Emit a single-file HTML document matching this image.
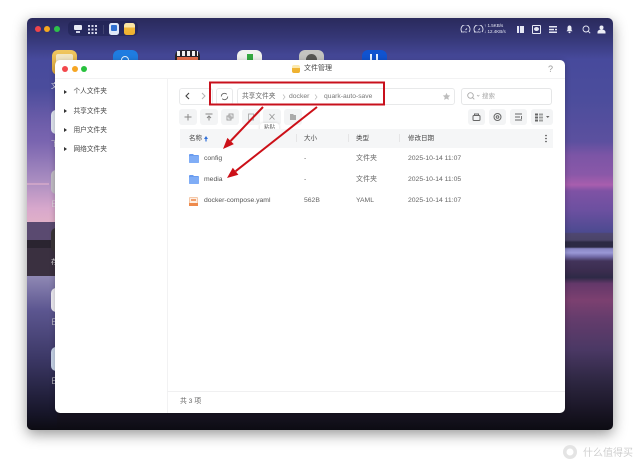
<!DOCTYPE html>
<html><head><meta charset="utf-8">
<style>
html,body{margin:0;padding:0;background:#fff;}
#p{position:relative;width:640px;height:466px;overflow:hidden;background:#fff;font-family:"Liberation Sans","Noto Sans CJK SC",sans-serif;color:#4a4a4a;filter:blur(.25px);}
.a{position:absolute;}
.t{position:absolute;white-space:nowrap;font-size:7px;line-height:10px;color:#555;}
.r{font-size:6.8px;}
.btn{position:absolute;width:18px;height:16px;background:#f3f4f5;border-radius:3px;}
.btn svg{position:absolute;left:0;top:0;}
#shadow{position:absolute;left:27px;top:18px;width:586px;height:412px;border-radius:5px;box-shadow:0 4px 14px rgba(0,0,0,.42);}
#desk{position:absolute;left:27px;top:18px;width:586px;height:412px;border-radius:5px;overflow:hidden;
background:linear-gradient(180deg,#2a2a5c 0,#363878 5%,#474a9c 10%,#4c4d9c 20%,#5c509f 30%,#7c55a6 33.3%,#8a58a8 38%,#a85eae 40.5%,#7e52a4 42%,#6c50a0 46.6%,#4c4a90 52%,#4e4670 52.3%,#4a4468 53.9%,#2c2a44 54.4%,#2c2a44 55.6%,#8886c4 56%,#9a98d6 57%,#6f68a4 58%,#42335a 59%,#3a2c4e 61.5%,#2e2a46 63%,#64386a 64.5%,#7c4070 68.4%,#643c6c 73%,#4a3864 80.6%,#2e2742 87.9%,#1a1626 95%,#0c0b12 100%);}
.ic{position:absolute;width:25px;height:25px;border-radius:6px;}
</style></head><body>
<div id="p">
<div id="shadow"></div>
<div id="desk">
  <!-- left side sky / sand -->
  <div class="a" style="left:0;top:70px;width:30px;height:134px;background:linear-gradient(180deg,rgba(90,80,168,0) 0,#7a65b0 40%,#a88cc0 68%,#d8a8cc 90%,#e0b0c8 100%);"></div>
  <div class="a" style="left:0;top:204px;width:30px;height:18px;background:#5a4a70;"></div>
  <div class="a" style="left:0;top:222px;width:30px;height:8px;background:#2a2430;"></div>
  <div class="a" style="left:0;top:230px;width:30px;height:28px;background:#3a3040;"></div>
  <div class="a" style="left:0;top:258px;width:30px;height:34px;background:linear-gradient(180deg,#8f88b4,#5c5690);"></div>
  <div class="a" style="left:0;top:292px;width:30px;height:120px;background:linear-gradient(180deg,#5c5690,#3c3866 40%,#17162a 85%,#0c0b12);"></div>
  <div class="a" style="left:0;top:165px;width:22px;height:2px;background:#e0b0cc;opacity:.6;"></div>
  <!-- top bar -->
  <div class="a" style="left:8px;top:8px;width:6px;height:6px;border-radius:50%;background:#f0444a;"></div>
  <div class="a" style="left:17px;top:8px;width:6px;height:6px;border-radius:50%;background:#f6a91f;"></div>
  <div class="a" style="left:27px;top:8px;width:6px;height:6px;border-radius:50%;background:#2ec14a;"></div>
  <div class="a" style="left:41px;top:3px;width:70px;height:15px;border-radius:5px;background:rgba(30,32,80,.55);"></div>
  <div class="a" style="left:47px;top:7px;width:8px;height:5px;border-radius:1px;background:#e8eaf4;"></div>
  <div class="a" style="left:49px;top:13px;width:4px;height:1.5px;background:#cfd2e6;"></div>
  <svg class="a" style="left:61px;top:7px;" width="9" height="9"><g fill="#d6d8ec"><rect x="0" y="0" width="2" height="2"/><rect x="3.500" y="0" width="2" height="2"/><rect x="7" y="0" width="2" height="2"/><rect x="0" y="3.500" width="2" height="2"/><rect x="3.500" y="3.500" width="2" height="2"/><rect x="7" y="3.500" width="2" height="2"/><rect x="0" y="7" width="2" height="2"/><rect x="3.500" y="7" width="2" height="2"/><rect x="7" y="7" width="2" height="2"/></g></svg>
  <div class="a" style="left:76px;top:7px;width:1px;height:9px;background:rgba(255,255,255,.12);"></div>
  <div class="a" style="left:82px;top:5px;width:10px;height:12px;border-radius:2.500px;background:#dfe8f8;"></div>
  <div class="a" style="left:84px;top:7px;width:6px;height:6px;border-radius:1px;background:#2f6fd0;"></div>
  <div class="a" style="left:97px;top:5px;width:11px;height:12px;border-radius:2.500px;background:linear-gradient(180deg,#fbe6a6 0,#fbe6a6 35%,#f2b93a 40%,#eeb02e 100%);"></div>
  <!-- status icons -->
  <svg class="a" style="left:433px;top:7px;" width="24" height="8" fill="none" stroke="#e2e4f2" stroke-width=".9"><path d="M2 7a4.500 4.500 0 1 1 7 0"/><path d="M5.500 5l1.500-1.500"/><path d="M15 7a4.500 4.500 0 1 1 7 0"/><path d="M18.500 5l1.500-1.500"/></svg>
  <div class="t" style="left:434px;top:12px;font-size:3px;line-height:4px;color:#dfe1f0;">CPU</div>
  <div class="t" style="left:447px;top:12px;font-size:3px;line-height:4px;color:#dfe1f0;">RAM</div>
  <div class="t" style="left:457px;top:5px;font-size:4.500px;line-height:6px;color:#e6e8f4;">↑ 1.5KB/s</div>
  <div class="t" style="left:457px;top:11px;font-size:4.500px;line-height:6px;color:#e6e8f4;">↓ 12.4KB/s</div>
  <div class="a" style="left:490px;top:8px;width:7px;height:7px;background:#e6e8f4;"></div>
  <div class="a" style="left:492px;top:8px;width:1px;height:7px;background:#3d4088;"></div>
  <div class="a" style="left:505px;top:7px;width:7px;height:7px;border:1px solid #e6e8f4;border-radius:1px;"></div>
  <div class="a" style="left:507px;top:9px;width:5px;height:4px;background:#e6e8f4;border-radius:50%;"></div>
  <svg class="a" style="left:522px;top:8px;" width="8" height="7" fill="#e6e8f4"><rect x="0" y="0" width="8" height="1.500"/><rect x="0" y="2.800" width="5" height="1.500"/><rect x="6" y="2.800" width="2" height="1.500"/><rect x="0" y="5.500" width="8" height="1.500"/></svg>
  <svg class="a" style="left:539px;top:7px;" width="7" height="9" fill="#eceef6"><path d="M3.500 .5c1.500 0 2 1.200 2 2.500v2l1 1.300H.5l1-1.300V3c0-1.300.5-2.500 2-2.500z"/><rect x="2.500" y="6.800" width="2" height="1.300" rx=".6"/></svg>
  <svg class="a" style="left:555px;top:7px;" width="9" height="9" fill="none" stroke="#e6e8f4" stroke-width=".9"><circle cx="4" cy="4" r="3"/><path d="M6.200 6.200l2 2"/></svg>
  <svg class="a" style="left:570px;top:7px;" width="9" height="9" fill="#eceef6"><circle cx="4.500" cy="2.500" r="2"/><path d="M.5 7c0-1.500 1.800-2.500 4-2.500s4 1 4 2.500v1.500h-8z"/></svg>
  <!-- desktop icons -->
  <div class="ic" style="left:25px;top:32px;background:linear-gradient(180deg,#f0c760,#dda63a);"></div>
  <div class="a" style="left:29px;top:36px;width:17px;height:14px;background:#f2e6c4;border-radius:2px;"></div>
  <div class="ic" style="left:86px;top:32px;background:#1f7ce0;"></div>
  <div class="a" style="left:94px;top:38px;width:8px;height:8px;border-radius:50%;border:1.500px solid #e8f1fc;box-sizing:border-box;"></div>
  <div class="ic" style="left:148px;top:32px;background:#26242a;"></div>
  <div class="a" style="left:150px;top:33px;width:21px;height:5px;background:repeating-linear-gradient(90deg,#f0f0f0 0 3px,#26242a 3px 5px);"></div>
  <div class="a" style="left:150px;top:39px;width:21px;height:3px;background:#e8704a;"></div>
  <div class="ic" style="left:210px;top:32px;background:#f1f2ee;"></div>
  <div class="a" style="left:220px;top:36px;width:6px;height:6px;background:#35a93f;"></div>
  <div class="ic" style="left:272px;top:32px;background:#c4c4c0;"></div>
  <div class="a" style="left:279px;top:36px;width:11px;height:11px;border-radius:50%;background:#565652;"></div>
  <div class="ic" style="left:335px;top:32px;background:#1053d0;"></div>
  <div class="a" style="left:343px;top:36px;width:2px;height:7px;background:#e8f0ff;"></div>
  <div class="a" style="left:349px;top:36px;width:2px;height:7px;background:#e8f0ff;"></div>
  <!-- left edge icons peeking -->
  <div class="a" style="left:24px;top:92px;width:10px;height:24px;border-radius:5px;background:#dfe4ee;"></div>
  <div class="a" style="left:24px;top:152px;width:10px;height:24px;border-radius:5px;background:#c0bcc4;"></div>
  <div class="a" style="left:24px;top:210px;width:10px;height:24px;border-radius:5px;background:#3a3438;"></div>
  <div class="a" style="left:24px;top:270px;width:10px;height:24px;border-radius:5px;background:#eceaf0;"></div>
  <div class="a" style="left:24px;top:329px;width:10px;height:24px;border-radius:5px;background:#c6d2e6;"></div>
  <div class="t" style="left:24px;top:64px;color:#eee;">文</div>
  <div class="t" style="left:24px;top:122px;color:#ddd;">下</div>
  <div class="t" style="left:24px;top:182px;color:#ddd;">日</div>
  <div class="t" style="left:24px;top:240px;color:#ddd;">存</div>
  <div class="t" style="left:24px;top:300px;color:#ddd;">日</div>
  <div class="t" style="left:24px;top:359px;color:#ddd;">日</div>
</div>

<!-- file manager window -->
<div class="a" style="left:55px;top:60px;width:510px;height:353px;background:#fff;border-radius:5px;box-shadow:0 1px 6px rgba(0,0,0,.25);overflow:hidden;">
  <div class="a" style="left:0;top:18px;width:510px;height:1px;background:#f2f2f3;"></div>
  <div class="a" style="left:111.500px;top:19px;width:1px;height:334px;background:#f2f2f3;"></div>
  <div class="a" style="left:112px;top:331px;width:398px;height:1px;background:#f0f0f1;"></div>
  <div class="a" style="left:7px;top:6px;width:6px;height:6px;border-radius:50%;background:#f3484c;"></div>
  <div class="a" style="left:17px;top:6px;width:6px;height:6px;border-radius:50%;background:#f6a623;"></div>
  <div class="a" style="left:26px;top:6px;width:6px;height:6px;border-radius:50%;background:#27c13d;"></div>
  <div class="a" style="left:237px;top:5px;width:8px;height:8px;border-radius:2px;background:linear-gradient(180deg,#fbe9b0 0,#fbe9b0 35%,#f0b636 40%,#eeb02e 100%);"></div>
  <div class="t" style="left:249px;top:4px;color:#444;">文件管理</div>
  <div class="t" style="left:493px;top:4px;color:#999;font-size:9px;">?</div>

  <!-- sidebar -->
  <svg class="a" style="left:8px;top:30px;" width="5" height="80" fill="#333"><path d="M1 0l3 2-3 2z"/><path d="M1 19l3 2-3 2z"/><path d="M1 38l3 2-3 2z"/><path d="M1 57l3 2-3 2z"/></svg>
  <div class="t" style="left:18.500px;top:27px;color:#444;font-size:6.700px;">个人文件夹</div>
  <div class="t" style="left:18.500px;top:46.500px;color:#444;font-size:6.700px;">共享文件夹</div>
  <div class="t" style="left:18.500px;top:65.500px;color:#444;font-size:6.700px;">用户文件夹</div>
  <div class="t" style="left:18.500px;top:85px;color:#444;font-size:6.700px;">网络文件夹</div>

  <!-- nav -->
  <div class="a" style="left:124px;top:28px;width:32px;height:15px;border:1px solid #e8e9ea;border-radius:3px;"></div>
  <svg class="a" style="left:129px;top:31px;" width="8" height="10" fill="none" stroke="#444" stroke-width="1.100"><path d="M5 2L2 5l3 3"/></svg>
  <svg class="a" style="left:144px;top:31px;" width="8" height="10" fill="none" stroke="#b5b5b5" stroke-width="1"><path d="M3 2l3 3-3 3"/></svg>
  <div class="a" style="left:161px;top:28px;width:15px;height:15px;border:1px solid #e8e9ea;border-radius:3px;"></div>
  <svg class="a" style="left:164px;top:31px;" width="11" height="11" fill="none" stroke="#666" stroke-width=".9"><path d="M2.300 5.500a3.200 3.200 0 0 1 5.500-2.200"/><path d="M8.700 5.500a3.200 3.200 0 0 1-5.500 2.200"/></svg>
  <div class="a" style="left:182px;top:28px;width:216px;height:15px;border:1px solid #e8e9ea;border-radius:3px;"></div>
  <div class="t" style="left:187px;top:31.500px;font-size:6.700px;color:#666;">共享文件夹</div>
  <div class="t" style="left:234px;top:31.500px;font-size:6.800px;color:#777;">docker</div>
  <div class="t" style="left:269px;top:31.500px;font-size:6.700px;color:#777;">quark-auto-save</div>
  <svg class="a" style="left:226px;top:33px;" width="6" height="8" fill="none" stroke="#bbb" stroke-width=".7"><path d="M2 1.500l2 2.500-2 2.500"/></svg>
  <svg class="a" style="left:258px;top:33px;" width="6" height="8" fill="none" stroke="#bbb" stroke-width=".7"><path d="M2 1.500l2 2.500-2 2.500"/></svg>
  <svg class="a" style="left:387px;top:32px;" width="9" height="9" fill="#bdbdbd"><path d="M4.500.8l1.100 2.400 2.600.3-1.900 1.800.5 2.600-2.300-1.300-2.300 1.300.5-2.600L.8 3.500l2.600-.3z"/></svg>
  <div class="a" style="left:406px;top:28px;width:89px;height:15px;border:1px solid #e5e6e7;border-radius:3px;"></div>
  <svg class="a" style="left:411px;top:31px;" width="14" height="10" fill="none" stroke="#aaa" stroke-width=".9"><circle cx="4.500" cy="4.500" r="2.800"/><path d="M6.500 6.500l1.800 1.800"/><path d="M11 4l1.200 1.200L13.400 4" stroke-width=".7"/></svg>
  <div class="t" style="left:427px;top:31.500px;color:#aaa;font-size:6.500px;">搜索</div>

  <!-- toolbar -->
  <div class="btn" style="left:124px;top:49px;"><svg width="18" height="16" fill="none" stroke="#888" stroke-width="1"><path d="M9 5v6.500M5.500 8h7"/></svg></div>
  <div class="btn" style="left:145px;top:49px;"><svg width="18" height="16" fill="none" stroke="#888" stroke-width="1"><path d="M5.500 5h7M9 11.500V7M7 9l2-2 2 2"/></svg></div>
  <div class="btn" style="left:166px;top:49px;"><svg width="18" height="16" fill="none" stroke="#999" stroke-width=".9"><rect x="8" y="5" width="4" height="4"/><rect x="6" y="7" width="4" height="4"/></svg></div>
  <div class="btn" style="left:187px;top:49px;"><svg width="18" height="16" fill="none" stroke="#aaa" stroke-width=".9"><rect x="6.500" y="5" width="5" height="6"/></svg></div>
  <div class="btn" style="left:208px;top:49px;"><svg width="18" height="16" fill="none" stroke="#999" stroke-width=".9"><path d="M6.500 5l5 5.500M11.500 5l-5 5.500"/></svg></div>
  <div class="btn" style="left:229px;top:49px;"><svg width="18" height="16" fill="#aaa"><path d="M6 5h3l1 1h2v5H6z"/></svg></div>
  <div class="a" style="left:205px;top:63px;width:19px;height:10px;background:#fff;border-radius:3px;box-shadow:0 0 3px rgba(0,0,0,.15);"></div>
  <div class="t" style="left:209px;top:63px;font-size:5.500px;color:#666;">粘贴</div>
  <div class="btn" style="left:413px;top:49px;width:17px;"><svg width="17" height="16" fill="none" stroke="#666" stroke-width="1"><rect x="5" y="6.500" width="7" height="5" rx="1"/><path d="M6.500 6.500V5h4v1.500"/></svg></div>
  <div class="btn" style="left:434px;top:49px;width:17px;"><svg width="17" height="16" fill="none" stroke="#666" stroke-width="1"><circle cx="8.500" cy="8" r="3.500"/><circle cx="8.500" cy="8" r="1.300"/></svg></div>
  <div class="btn" style="left:455px;top:49px;width:17px;"><svg width="17" height="16" fill="none" stroke="#666" stroke-width=".9"><path d="M5 5h7M5 8h5M5 11h7M11.500 7v3"/></svg></div>
  <div class="btn" style="left:476px;top:49px;width:22px;"><svg width="22" height="16" fill="#666"><rect x="4" y="4.500" width="3" height="2"/><rect x="8" y="4.500" width="4" height="2" opacity=".6"/><rect x="4" y="7.500" width="3" height="2"/><rect x="8" y="7.500" width="4" height="2" opacity=".6"/><rect x="4" y="10.500" width="3" height="2"/><rect x="8" y="10.500" width="4" height="2" opacity=".6"/><path d="M15 7h3.500l-1.750 2z"/></svg></div>

  <!-- table header -->
  <div class="a" style="left:125px;top:69px;width:373px;height:19px;background:#f5f6f7;"></div>
  <div class="t" style="left:134px;top:73.500px;font-size:6.500px;color:#444;">名称</div>
  <svg class="a" style="left:148px;top:75px;" width="6" height="8" fill="#2f6fd8"><path d="M3 1l2 3H1z"/><rect x="2" y="4" width="2" height="2.500" opacity=".6"/></svg>
  <div class="a" style="left:241px;top:74px;width:1px;height:8px;background:#e5e5e6;"></div>
  <div class="t" style="left:249px;top:73.500px;font-size:6.500px;color:#444;">大小</div>
  <div class="a" style="left:293px;top:74px;width:1px;height:8px;background:#e5e5e6;"></div>
  <div class="t" style="left:301px;top:73.500px;font-size:6.500px;color:#444;">类型</div>
  <div class="a" style="left:344px;top:74px;width:1px;height:8px;background:#e5e5e6;"></div>
  <div class="t" style="left:353px;top:73.500px;font-size:6.500px;color:#444;">修改日期</div>
  <svg class="a" style="left:489px;top:74px;" width="4" height="10" fill="#444"><circle cx="2" cy="1.500" r=".8"/><circle cx="2" cy="4.500" r=".8"/><circle cx="2" cy="7.500" r=".8"/></svg>

  <!-- rows -->
  <svg class="a" style="left:133px;top:93px;" width="12" height="11"><path d="M1 2a1 1 0 0 1 1-1h3l1 1h4a1 1 0 0 1 1 1v6a1 1 0 0 1-1 1H2a1 1 0 0 1-1-1z" fill="#6a9cf0"/><rect x="1" y="3" width="10" height="7" rx="1" fill="#80adf6"/></svg>
  <div class="t r" style="left:149px;top:94px;color:#555;">config</div>
  <div class="t r" style="left:249px;top:94px;color:#666;">-</div>
  <div class="t" style="left:301px;top:94px;color:#666;">文件夹</div>
  <div class="t r" style="left:353px;top:94px;color:#666;">2025-10-14 11:07</div>

  <svg class="a" style="left:133px;top:114px;" width="12" height="11"><path d="M1 2a1 1 0 0 1 1-1h3l1 1h4a1 1 0 0 1 1 1v6a1 1 0 0 1-1 1H2a1 1 0 0 1-1-1z" fill="#6a9cf0"/><rect x="1" y="3" width="10" height="7" rx="1" fill="#80adf6"/></svg>
  <div class="t r" style="left:149px;top:115px;color:#555;">media</div>
  <div class="t r" style="left:249px;top:115px;color:#666;">-</div>
  <div class="t" style="left:301px;top:115px;color:#666;">文件夹</div>
  <div class="t r" style="left:353px;top:115px;color:#666;">2025-10-14 11:05</div>

  <div class="a" style="left:134px;top:137px;width:9px;height:9px;background:#fdeee2;border:.5px solid #f5c8a8;border-radius:1px;box-sizing:border-box;"></div>
  <div class="a" style="left:134px;top:142.500px;width:9px;height:3px;background:#ee8a4c;"></div>
  <div class="a" style="left:136px;top:138.500px;width:5px;height:2px;background:#f0a070;"></div>
  <div class="t r" style="left:149px;top:136px;color:#555;">docker-compose.yaml</div>
  <div class="t r" style="left:249px;top:136px;color:#666;">562B</div>
  <div class="t r" style="left:301px;top:136px;color:#666;">YAML</div>
  <div class="t r" style="left:353px;top:136px;color:#666;">2025-10-14 11:07</div>

  <div class="t" style="left:125px;top:336.500px;color:#666;font-size:6.800px;">共 3 项</div>
</div>

<!-- red annotations -->
<svg class="a" style="left:0;top:0;" width="640" height="466" fill="none">
  <rect x="210" y="82.500" width="174" height="22" stroke="#c8101c" stroke-width="2"/>
  <path d="M263 107L230.600 141" stroke="#cc1018" stroke-width="2"/>
  <path d="M223 149L233.800 144.100 227.400 137.900z" fill="#cc1018"/>
  <path d="M317 107L235.600 171.200" stroke="#cc1018" stroke-width="2"/>
  <path d="M227 178L238.400 174.700 232.800 167.700z" fill="#cc1018"/>
</svg>

<!-- watermark -->
<svg class="a" style="left:562px;top:444px;" width="16" height="16" fill="none"><circle cx="8" cy="8" r="7" fill="#e4e4e4"/><circle cx="8" cy="8" r="3.500" fill="#fff"/></svg>
<div class="t" style="left:583px;top:447px;font-size:10px;line-height:13px;color:#cfcfcf;">什么值得买</div>
</div>
</body></html>
